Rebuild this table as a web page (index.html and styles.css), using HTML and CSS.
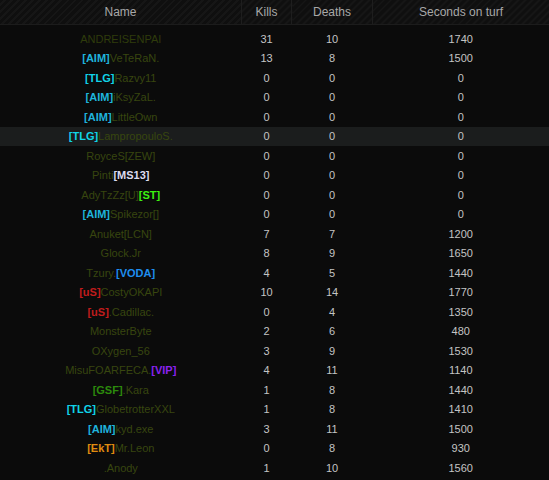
FILE: index.html
```html
<!DOCTYPE html>
<html lang="en">
<head>
    <meta charset="UTF-8">
    <title>Turf Stats</title>
    <link rel="stylesheet" href="styles.css">
</head>
<body>
    <table class="stats">
        <thead>
            <tr>
                <th class="col-name">Name</th>
                <th class="col-kills">Kills</th>
                <th class="col-deaths">Deaths</th>
                <th class="col-secs">Seconds on turf</th>
            </tr>
        </thead>
        <tbody>
            <tr class="first"><td><span class="dim">ANDREISENPAI</span></td><td>31</td><td>10</td><td>1740</td></tr>
            <tr><td><span class="aim">[AIM]</span>VeTeRaN.</td><td>13</td><td>8</td><td>1500</td></tr>
            <tr><td><span class="tlg">[TLG]</span>Razvy11</td><td>0</td><td>0</td><td>0</td></tr>
            <tr><td><span class="aim">[AIM]</span>iKsyZaL.</td><td>0</td><td>0</td><td>0</td></tr>
            <tr><td><span class="aim">[AIM]</span>LittleOwn</td><td>0</td><td>0</td><td>0</td></tr>
            <tr class="hover"><td><span class="tlg">[TLG]</span>LampropouloS.</td><td>0</td><td>0</td><td>0</td></tr>
            <tr><td>RoyceS[ZEW]</td><td>0</td><td>0</td><td>0</td></tr>
            <tr><td>Pinti<span class="ms">[MS13]</span></td><td>0</td><td>0</td><td>0</td></tr>
            <tr><td>AdyTzZz[U]<span class="st">[ST]</span></td><td>0</td><td>0</td><td>0</td></tr>
            <tr><td><span class="aim">[AIM]</span>Spikezor[]</td><td>0</td><td>0</td><td>0</td></tr>
            <tr><td>Anuket[LCN]</td><td>7</td><td>7</td><td>1200</td></tr>
            <tr><td>Glock.Jr</td><td>8</td><td>9</td><td>1650</td></tr>
            <tr><td>Tzury.<span class="voda">[VODA]</span></td><td>4</td><td>5</td><td>1440</td></tr>
            <tr><td><span class="us">[uS]</span>CostyOKAPI</td><td>10</td><td>14</td><td>1770</td></tr>
            <tr><td><span class="us">[uS]</span>.Cadillac.</td><td>0</td><td>4</td><td>1350</td></tr>
            <tr><td>MonsterByte</td><td>2</td><td>6</td><td>480</td></tr>
            <tr><td>OXygen_56</td><td>3</td><td>9</td><td>1530</td></tr>
            <tr><td>MisuFOARFECA.<span class="vip">[VIP]</span></td><td>4</td><td>11</td><td>1140</td></tr>
            <tr><td><span class="gsf">[GSF]</span>.Kara</td><td>1</td><td>8</td><td>1440</td></tr>
            <tr><td><span class="tlg">[TLG]</span>GlobetrotterXXL</td><td>1</td><td>8</td><td>1410</td></tr>
            <tr><td><span class="aim">[AIM]</span>kyd.exe</td><td>3</td><td>11</td><td>1500</td></tr>
            <tr><td><span class="ekt">[EkT]</span>Mr.Leon</td><td>0</td><td>8</td><td>930</td></tr>
            <tr><td>.Anody</td><td>1</td><td>10</td><td>1560</td></tr>
        </tbody>
    </table>
</body>
</html>
```

FILE: styles.css
```css
body {
    margin: 0;
    background-color: #0b0b0b;
    font-family: "Liberation Sans", Arial, sans-serif;
    height: 480px;
    overflow: hidden;
}
.stats {
    width: 549px;
    border-collapse: collapse;
    table-layout: fixed;
}
.stats th {
    height: 24px;
    padding: 0;
    font-size: 12px;
    font-weight: normal;
    color: #a8a8a8;
    text-align: center;
    background: repeating-linear-gradient(-45deg, #0f0f0f 0, #0f0f0f 3px, #161616 3px, #161616 5px);
    border-bottom: 1px solid #1c1c1c;
    border-left: 1px solid #1e1e1e;
}
.stats th:first-child {
    border-left: none;
}
.col-name { width: 241px; }
.col-kills { width: 49px; }
.col-deaths { width: 80px; }
.stats td {
    height: 19.5px;
    padding: 0;
    font-size: 11px;
    color: #c4c4c4;
    text-align: center;
}
.stats td:first-child {
    color: #38460f;
}
.stats td span {
    font-weight: bold;
}
.stats td span.dim {
    font-weight: normal;
}
.stats tr.first td {
    padding-top: 4px;
}
.stats tr.hover td {
    background-color: #1b1d1d;
}
.dim { color: #2f3c0b; }
.aim { color: #1fb4dc; }
.tlg { color: #10d4e8; }
.ms { color: #dcdcf0; }
.st { color: #3cf010; }
.voda { color: #1e8ef0; }
.us { color: #c01c1c; }
.vip { color: #8a22f0; }
.gsf { color: #2c8a0c; }
.ekt { color: #e08c10; }
```
